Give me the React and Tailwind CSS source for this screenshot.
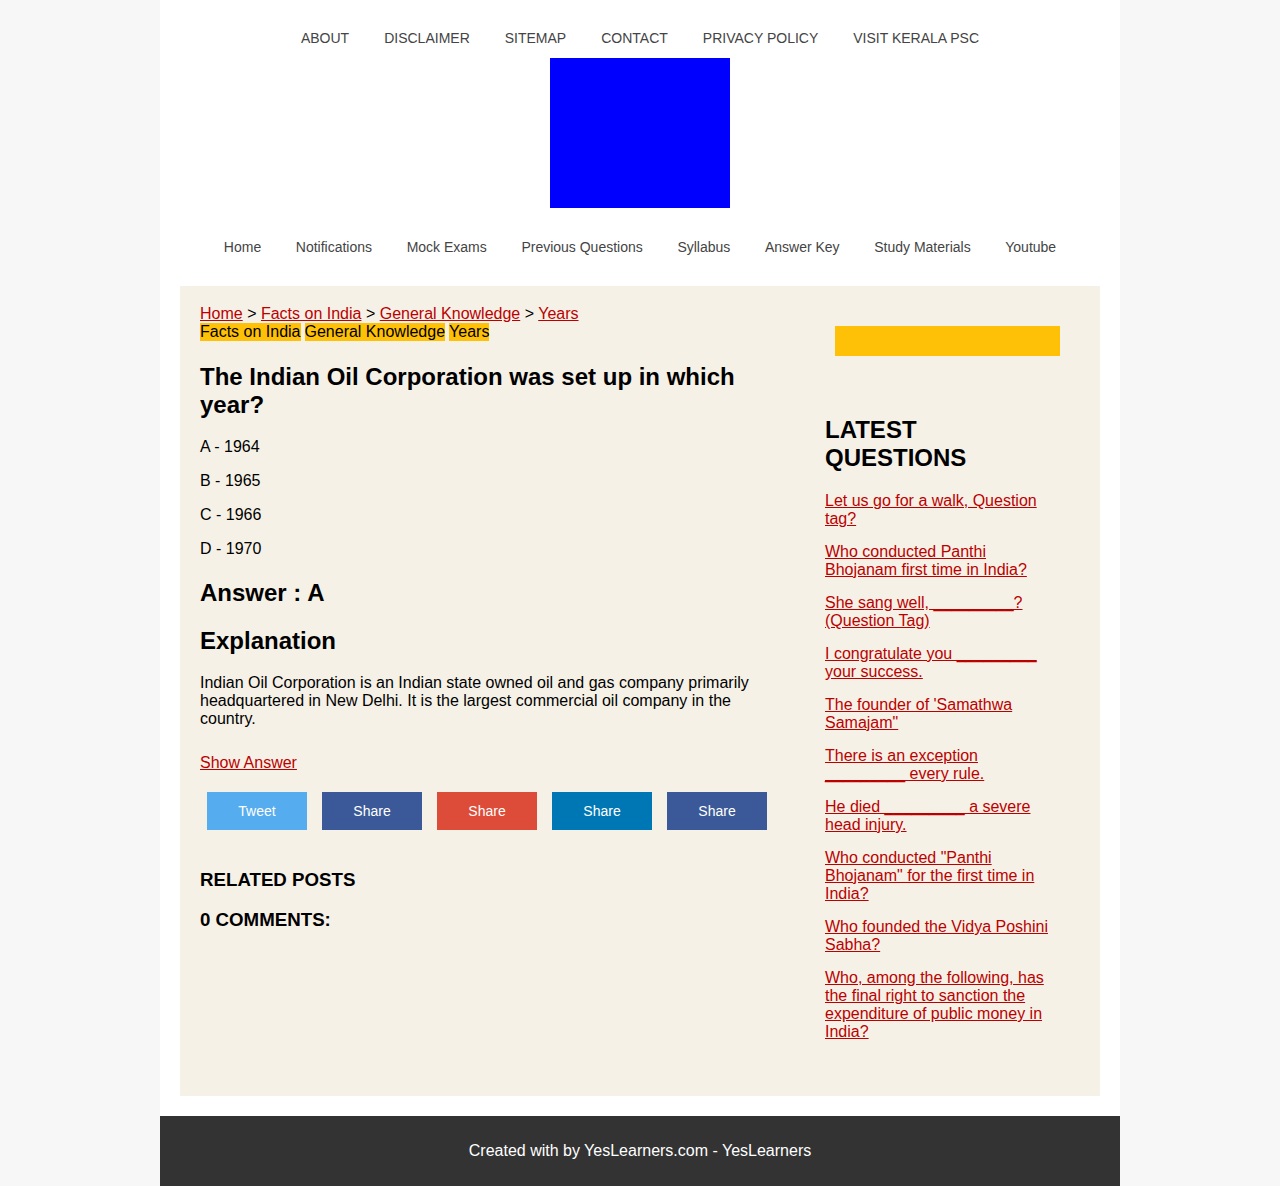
import React from 'react';

const topLinks = ['ABOUT', 'DISCLAIMER', 'SITEMAP', 'CONTACT', 'PRIVACY POLICY', 'VISIT KERALA PSC'];
const mainLinks = ['Home', 'Notifications', 'Mock Exams', 'Previous Questions', 'Syllabus', 'Answer Key', 'Study Materials', 'Youtube'];

const latest = [
  'Let us go for a walk, Question tag?',
  'Who conducted Panthi Bhojanam first time in India?',
  'She sang well, _________? (Question Tag)',
  'I congratulate you _________ your success.',
  "The founder of 'Samathwa Samajam\"",
  'There is an exception _________ every rule.',
  'He died _________ a severe head injury.',
  'Who conducted "Panthi Bhojanam" for the first time in India?',
  'Who founded the Vidya Poshini Sabha?',
  'Who, among the following, has the final right to sanction the expenditure of public money in India?',
];

const shares = [
  {label: 'Tweet', cls: 'bg-[#55acee]'},
  {label: 'Share', cls: 'bg-[#3b5998]'},
  {label: 'Share', cls: 'bg-[#dd4b39]'},
  {label: 'Share', cls: 'bg-[#0077b5]'},
  {label: 'Share', cls: 'bg-[#3b5998]'},
];

const App = () => {
  return (
    <div className="min-h-[1186px] bg-[#f7f7f7] font-[Liberation_Sans,Arial,sans-serif] text-black">
      <div className="mx-auto w-[960px] bg-white">
        <header className="pt-[30px]">
          <nav className="flex justify-center gap-[35px] text-[14px] leading-[16px] text-[#444]">
            {topLinks.map((l) => (
              <a key={l} href="#">{l}</a>
            ))}
          </nav>
          <div className="flex justify-center pt-[12px]">
            <div className="h-[150px] w-[180px] bg-[#0000ff]"></div>
          </div>
          <nav className="flex justify-center gap-[34.6px] pt-[31px] pb-[31px] text-[14px] leading-[16px] text-[#444]">
            {mainLinks.map((l) => (
              <a key={l} href="#">{l}</a>
            ))}
          </nav>
        </header>

        <div className="px-[20px] pb-[20px]">
          <div className="flex bg-[#f6f1e7] px-[20px] pt-[19px] pb-[40px]">
            <main className="w-[580px] text-[16px] leading-[18px]">
              <div>
                <a href="#" className="text-[#b00] underline">Home</a> &gt;{' '}
                <a href="#" className="text-[#b00] underline">Facts on India</a> &gt;{' '}
                <a href="#" className="text-[#b00] underline">General Knowledge</a> &gt;{' '}
                <a href="#" className="text-[#b00] underline">Years</a>
              </div>
              <div className="flex gap-[4px]">
                <span className="bg-[#ffc107]">Facts on India</span>
                <span className="bg-[#ffc107]">General Knowledge</span>
                <span className="bg-[#ffc107]">Years</span>
              </div>
              <h1 className="mt-[22px] text-[24px] font-bold leading-[28px]">
                The Indian Oil Corporation was set up in which year?
              </h1>
              <p className="mt-[19px]">A - 1964</p>
              <p className="mt-[16px]">B - 1965</p>
              <p className="mt-[16px]">C - 1966</p>
              <p className="mt-[16px]">D - 1970</p>
              <h2 className="mt-[22px] text-[24px] font-bold leading-[26px]">Answer : A</h2>
              <h2 className="mt-[22px] text-[24px] font-bold leading-[26px]">Explanation</h2>
              <p className="mt-[20px] w-[560px] text-[16px] leading-[18px]">
                Indian Oil Corporation is an Indian state owned oil and gas company primarily headquartered in New Delhi. It is the largest commercial oil company in the country.
              </p>
              <a href="#" className="mt-[26px] block w-fit text-[16px] text-[#b00] underline">Show Answer</a>
              <div className="mt-[20px] flex gap-[15px] pl-[7px]">
                {shares.map((s, i) => (
                  <a key={i} href="#" className={`flex h-[38px] w-[100px] items-center justify-center text-[14px] text-white ${s.cls}`}>
                    {s.label}
                  </a>
                ))}
              </div>
              <h3 className="mt-[40px] text-[18.7px] font-bold leading-[20px]">RELATED POSTS</h3>
              <h3 className="mt-[20px] text-[18.7px] font-bold leading-[20px]">0 COMMENTS:</h3>
            </main>

            <aside className="ml-[45px] w-[235px]">
              <div className="ml-[10px] mt-[21px] h-[30px] w-[225px] bg-[#ffc107]"></div>
              <h2 className="mt-[60px] text-[24px] font-bold leading-[28px]">LATEST QUESTIONS</h2>
              <ul className="mt-[20px] w-[225px]">
                {latest.map((q, i) => (
                  <li key={i} className="mb-[15px] text-[16px] leading-[18px]">
                    <a href="#" className="text-[#b00] underline">{q}</a>
                  </li>
                ))}
              </ul>
            </aside>
          </div>
        </div>

        <footer className="flex h-[70px] items-center justify-center bg-[#333] text-[16px] text-white">
          Created with by YesLearners.com - YesLearners
        </footer>
      </div>
    </div>
  );
};

export default App;
